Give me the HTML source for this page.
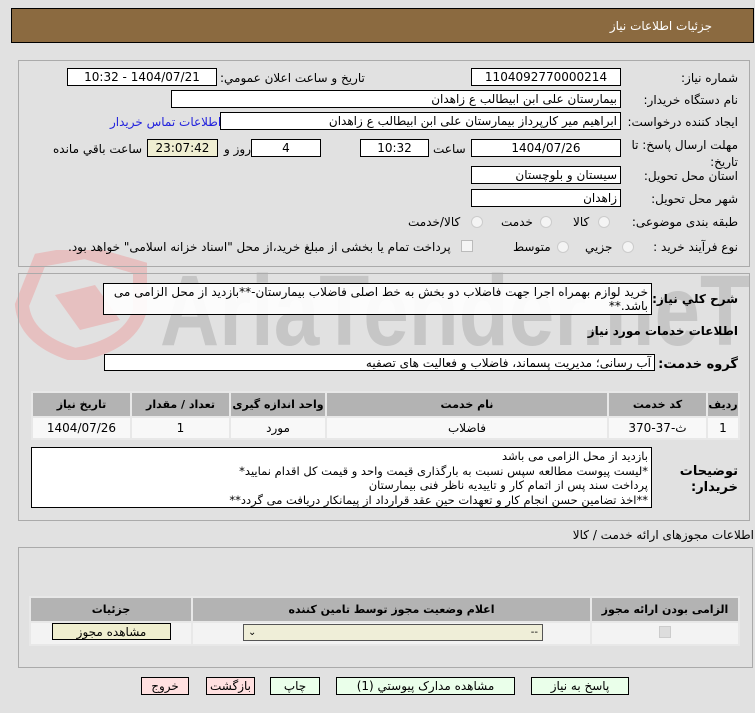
<!DOCTYPE html>
<html><head><meta charset="utf-8">
<style>
*{box-sizing:border-box;margin:0;padding:0}
body{width:755px;height:713px;background:#e1e1e1;position:relative;overflow:hidden;font-family:"DejaVu Sans","Liberation Sans",sans-serif;font-size:11.5px;color:#000}
.a{position:absolute}
.box{position:absolute;background:#fff;border:1px solid #000;direction:rtl;text-align:right;padding:1px 3px;white-space:nowrap;line-height:15px;font-size:12px}
.c{text-align:center}
.lab{position:absolute;direction:rtl;white-space:nowrap;font-size:12px}
.panel{position:absolute;border:1px solid #aaa;}
.rad{position:absolute;width:12px;height:12px;border-radius:50%;border:1px solid #ccc;background:#f4f4f4}
table{border-collapse:collapse;position:absolute;direction:rtl}
td{border:2px solid #e8e8e8;text-align:center;font-size:12px}
th{border:2px solid #e8e8e8;background:#b3b3b3;font-weight:bold;font-size:11px;white-space:nowrap}
.btn{position:absolute;border:1px solid #000;text-align:center;font-size:12px;line-height:16px;background:#eaffea}
</style></head><body>
<div class="a" style="left:11px;top:8px;width:743px;height:35px;background:#8b6a40;border:1px solid #000"></div>
<div class="lab" style="right:43px;top:19px;color:#fff;font-size:12px">جزئیات اطلاعات نیاز</div>

<!-- watermark -->
<svg class="a" style="left:0;top:250px" width="755" height="110">
<path d="M40 10 L85 2 L140 18 L140 60 Q130 95 75 105 Q25 90 22 55 Z" fill="none" stroke="#e6c0c0" stroke-width="14"/>
<path d="M55 45 L95 35 L120 70 L80 80 Z" fill="#e6c0c0"/>
<text x="160" y="95" font-family="Liberation Sans Narrow, Liberation Sans" font-weight="bold" font-size="100" fill="#c6c6c6" textLength="590" lengthAdjust="spacingAndGlyphs">AriaTender.neT</text>
</svg>

<div class="panel" style="left:18px;top:60px;width:732px;height:207px"></div>
<div class="lab" style="right:17px;top:71px">شماره نیاز:</div>
<div class="box c" style="left:471px;top:68px;width:150px;height:18px">1104092770000214</div>
<div class="lab" style="left:220px;top:71px">تاريخ و ساعت اعلان عمومي:</div>
<div class="box c" style="left:67px;top:68px;width:150px;height:18px">1404/07/21 - 10:32</div>

<div class="lab" style="right:17px;top:93px">نام دستگاه خريدار:</div>
<div class="box" style="left:171px;top:90px;width:450px;height:18px">بیمارستان علی ابن ابیطالب  ع  زاهدان</div>

<div class="lab" style="right:17px;top:115px">ایجاد کننده درخواست:</div>
<div class="box" style="left:220px;top:112px;width:401px;height:18px">ابراهیم میر کارپرداز بیمارستان علی ابن ابیطالب  ع  زاهدان</div>
<div class="lab" style="left:110px;top:115px;color:#2222dd">اطلاعات تماس خریدار</div>

<div class="lab" style="right:17px;top:137px;line-height:17px">مهلت ارسال پاسخ: تا<br>تاریخ:</div>
<div class="box c" style="left:471px;top:139px;width:150px;height:18px">1404/07/26</div>
<div class="lab" style="left:433px;top:142px">ساعت</div>
<div class="box c" style="left:360px;top:139px;width:69px;height:18px">10:32</div>
<div class="box c" style="left:251px;top:139px;width:70px;height:18px">4</div>
<div class="lab" style="left:224px;top:142px">روز و</div>
<div class="box c" style="left:147px;top:139px;width:71px;height:18px;background:#efeed2">23:07:42</div>
<div class="lab" style="left:53px;top:142px">ساعت باقي مانده</div>

<div class="lab" style="right:17px;top:169px">استان محل تحویل:</div>
<div class="box" style="left:471px;top:166px;width:150px;height:18px">سیستان و بلوچستان</div>
<div class="lab" style="right:17px;top:192px">شهر محل تحویل:</div>
<div class="box" style="left:471px;top:189px;width:150px;height:18px">زاهدان</div>

<div class="lab" style="right:17px;top:215px">طبقه بندی موضوعی:</div>
<div class="rad" style="left:598px;top:216px"></div><div class="lab" style="left:573px;top:215px">كالا</div>
<div class="rad" style="left:540px;top:216px"></div><div class="lab" style="left:501px;top:215px">خدمت</div>
<div class="rad" style="left:471px;top:216px"></div><div class="lab" style="left:408px;top:215px">كالا/خدمت</div>

<div class="lab" style="right:17px;top:240px">نوع فرآیند خرید :</div>
<div class="rad" style="left:622px;top:241px"></div><div class="lab" style="left:585px;top:240px">جزيي</div>
<div class="rad" style="left:557px;top:241px"></div><div class="lab" style="left:513px;top:240px">متوسط</div>
<div class="a" style="left:461px;top:240px;width:12px;height:12px;border:1px solid #bbb;background:#f4f4f4"></div>
<div class="lab" style="left:68px;top:240px">پرداخت تمام یا بخشی از مبلغ خرید،از محل "اسناد خزانه اسلامی" خواهد بود.</div>

<div class="panel" style="left:18px;top:273px;width:732px;height:248px"></div>
<div class="lab" style="right:17px;top:292px;font-weight:bold">شرح كلي نياز:</div>
<div class="box" style="left:103px;top:283px;width:549px;height:32px;white-space:normal;line-height:14px;background:rgba(255,255,255,.9)">خرید لوازم بهمراه اجرا جهت فاضلاب دو بخش به خط اصلی فاضلاب بیمارستان-**بازدید از محل الزامی می باشد.**</div>
<div class="lab" style="right:17px;top:324px;font-weight:bold">اطلاعات خدمات مورد نياز</div>
<div class="lab" style="right:17px;top:357px;font-weight:bold;font-size:13px">گروه خدمت:</div>
<div class="box" style="left:104px;top:354px;width:551px;height:17px;line-height:14px">آب رسانی؛ مدیریت پسماند، فاضلاب و فعالیت های تصفیه</div>

<table style="left:31px;top:391px;width:709px;height:49px;background:#f8f8f8">
<tr style="height:25px"><th style="width:32px">رديف</th><th style="width:99px">کد خدمت</th><th style="width:282px">نام خدمت</th><th style="width:96px">واحد اندازه گیری</th><th style="width:99px">تعداد / مقدار</th><th>تاريخ نياز</th></tr>
<tr><td>1</td><td>ث-37-370</td><td>فاضلاب</td><td>مورد</td><td>1</td><td>1404/07/26</td></tr>
</table>

<div class="lab" style="right:17px;top:464px;font-weight:bold;font-size:13px;line-height:16px">توضیحات<br>خریدار:</div>
<div class="box" style="left:31px;top:447px;width:621px;height:61px;white-space:normal;line-height:14.5px;font-size:11.5px">بازدید از محل الزامی می باشد<br>*لیست پیوست مطالعه سپس نسبت به بارگذاری قیمت واحد و قیمت کل اقدام نمایید*<br>پرداخت سند پس از اتمام کار و تاییدیه ناظر فنی بیمارستان<br>**اخذ تضامین حسن انجام کار و تعهدات حین عقد قرارداد از پیمانکار دریافت می گردد**</div>

<div class="lab" style="right:1px;top:528px">اطلاعات مجوزهای ارائه خدمت / کالا</div>
<div class="panel" style="left:18px;top:547px;width:735px;height:121px"></div>
<table style="left:29px;top:596px;width:711px;height:50px;background:#f3f3f3">
<tr style="height:25px"><th style="width:148px">الزامی بودن ارائه مجوز</th><th style="width:399px">اعلام وضعیت مجوز توسط تامین کننده</th><th>جزئیات</th></tr>
<tr><td><span style="display:inline-block;width:12px;height:12px;border:1px solid #ccc;background:#ddd"></span></td><td></td><td></td></tr>
</table>
<div class="a" style="left:243px;top:624px;width:300px;height:17px;border:1px solid #555;background:#efeed8;font-size:10px;line-height:15px;padding:0 4px">⌄<span style="float:right">--</span></div>
<div class="btn" style="left:52px;top:623px;width:119px;height:17px;background:#efeecf">مشاهده مجوز</div>

<div class="btn" style="left:531px;top:677px;width:98px;height:18px">پاسخ به نياز</div>
<div class="btn" style="left:336px;top:677px;width:179px;height:18px">مشاهده مدارک پیوستي (1)</div>
<div class="btn" style="left:270px;top:677px;width:50px;height:18px">چاپ</div>
<div class="btn" style="left:206px;top:677px;width:49px;height:18px;background:#ffe0e0">بازگشت</div>
<div class="btn" style="left:141px;top:677px;width:48px;height:18px;background:#ffe0e0">خروج</div>
</body></html>
